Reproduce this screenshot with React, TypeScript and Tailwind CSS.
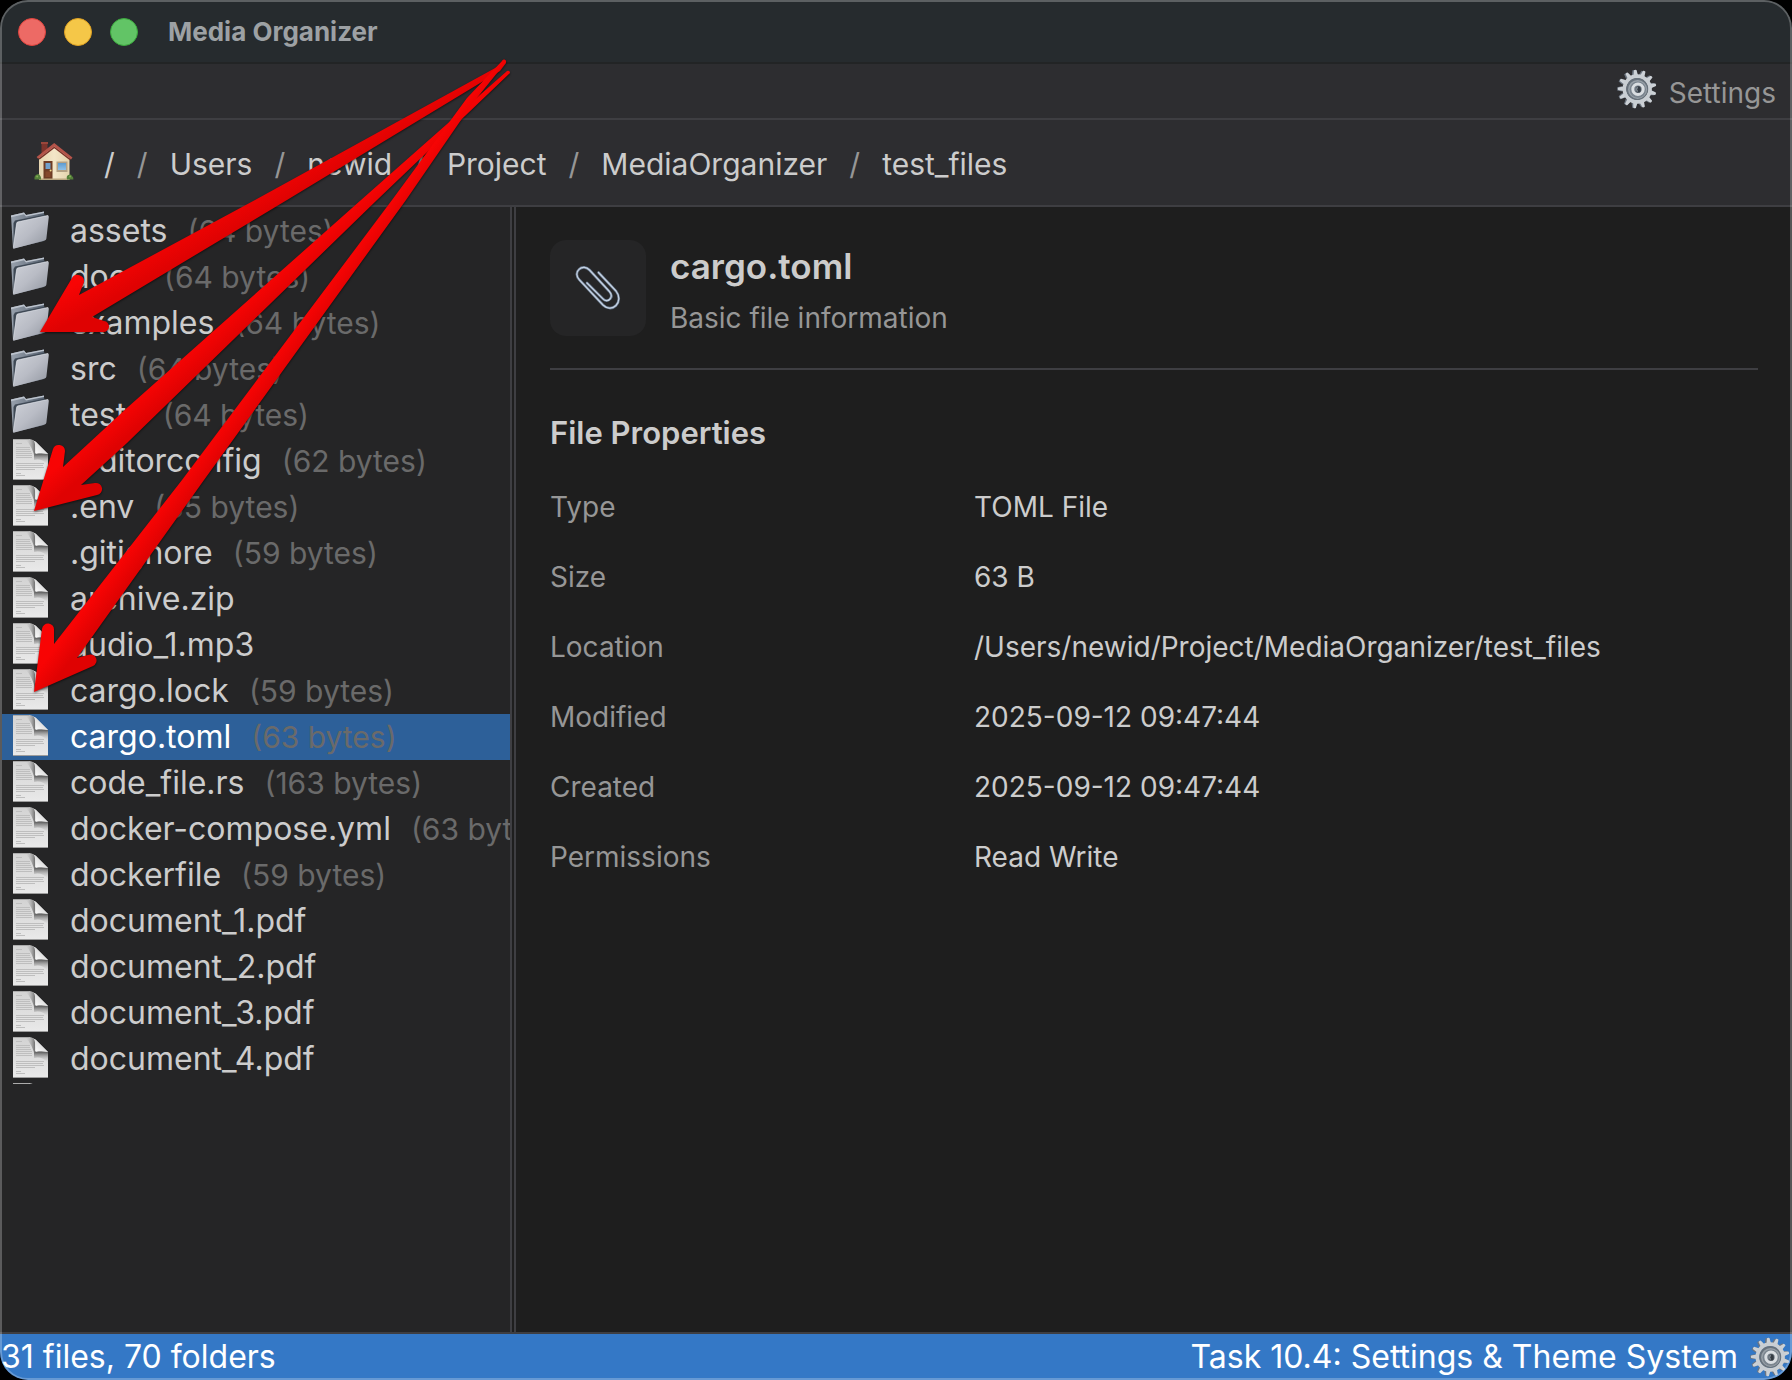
import React from "react";

const font = "font-['Inter','Liberation_Sans',sans-serif]";

type Entry = { name: string; size?: string; folder?: boolean; selected?: boolean };

const entries: Entry[] = [
  { name: "assets", size: "64 bytes", folder: true },
  { name: "docs", size: "64 bytes", folder: true },
  { name: "examples", size: "64 bytes", folder: true },
  { name: "src", size: "64 bytes", folder: true },
  { name: "tests", size: "64 bytes", folder: true },
  { name: ".editorconfig", size: "62 bytes" },
  { name: ".env", size: "65 bytes" },
  { name: ".gitignore", size: "59 bytes" },
  { name: "archive.zip" },
  { name: "audio_1.mp3" },
  { name: "cargo.lock", size: "59 bytes" },
  { name: "cargo.toml", size: "63 bytes", selected: true },
  { name: "code_file.rs", size: "163 bytes" },
  { name: "docker-compose.yml", size: "63 bytes" },
  { name: "dockerfile", size: "59 bytes" },
  { name: "document_1.pdf" },
  { name: "document_2.pdf" },
  { name: "document_3.pdf" },
  { name: "document_4.pdf" },
];

const properties = [
  ["Type", "TOML File"],
  ["Size", "63 B"],
  ["Location", "/Users/newid/Project/MediaOrganizer/test_files"],
  ["Modified", "2025-09-12 09:47:44"],
  ["Created", "2025-09-12 09:47:44"],
  ["Permissions", "Read Write"],
];

const crumbs = ["/", "Users", "newid", "Project", "MediaOrganizer", "test_files"];

function Gear() {
  const teeth = Array.from({ length: 13 }, (_, i) => (i * 360) / 13 - 6);
  return (
    <svg viewBox="0 0 40 40" className="size-10 shrink-0" aria-hidden="true">
      <g fill="#6c7580">
        {teeth.map((a) => (
          <path key={a} d="M16.4 6 L17.4 1 H20.6 L22 6 Z" transform={`rotate(${a} 19.2 20)`} />
        ))}
      </g>
      <g fill="#ccd1d6">
        {teeth.map((a) => (
          <path key={a} d="M18 6.5 L18.9 1 Q20.2 .2 21.5 1 L22.4 6.5 Z" transform={`rotate(${a} 20.2 20)`} />
        ))}
      </g>
      <circle cx="20.2" cy="20" r="12.7" fill="none" stroke="#c9ced3" strokeWidth="4" />
      <circle cx="20.2" cy="20" r="11" fill="#68727c" />
      <circle cx="20.6" cy="20.4" r="9.5" fill="#98a0a8" />
      <circle cx="20.8" cy="20.6" r="8.2" fill="#7a848e" />
      <circle cx="21" cy="20.2" r="5.2" fill="#6f7882" stroke="#d9dde1" strokeWidth="3" />
      <ellipse cx="21.4" cy="20.4" rx="2.4" ry="3.2" fill="#343b43" />
      <path d="M20.3 18.2 q-1.2 2.2 0 4.4" fill="none" stroke="#a9b1b9" strokeWidth="1" />
    </svg>
  );
}

function House() {
  return (
    <svg viewBox="0 0 40 40" className="size-10" aria-hidden="true">
      <defs>
        <linearGradient id="wall" x1="0" x2="1">
          <stop offset="0" stopColor="#e6d5b0" />
          <stop offset=".5" stopColor="#f3e6c8" />
          <stop offset="1" stopColor="#e4d3ad" />
        </linearGradient>
        <linearGradient id="pane" x1="0" x2="0" y1="0" y2="1">
          <stop offset="0" stopColor="#5d9bd0" />
          <stop offset="1" stopColor="#8fc1e8" />
        </linearGradient>
      </defs>
      <path d="M7.5 1.5 H13.500 V9 L7.5 14 Z" fill="#7d342c" />
      <path d="M7 1 H14 V3 H7 Z" fill="#9a463b" />
      <path d="M5 16 L20.5 4.5 L35.500 16 V38.500 H5 Z" fill="url(#wall)" />
      <path d="M20.2 2 L38.5 16.500 L37 18.600 L20.3 5.400 L4.200 17.800 L2.6 16 Z" fill="#b5544a" />
      <path d="M20.3 5.400 L37 18.600 L35.500 19 L20.3 7.200 L5.700 18.400 L4.200 17.800 Z" fill="#7b3028" />
      <path d="M9.500 20 H18.500 V38 H9.500 Z" fill="#6e3c25" />
      <path d="M11.500 22 H16.500 V28 H11.500 Z" fill="#6f9fcb" />
      <path d="M11.500 30.500 H16.500 V36 H11.500 Z" fill="#85482c" />
      <circle cx="16.600" cy="29.500" r="1" fill="#f0d88e" />
      <path d="M22.500 20.500 H33.500 V31 H22.500 Z" fill="#b3a184" />
      <path d="M24 22 H32 V29 H24 Z" fill="url(#pane)" />
      <path d="M5 37.500 H35.500 V39 H5 Z" fill="#b9a67f" />
      <path d="M.5 38.500 q-.5-4 2.300-5 q2-1.400 2.800.4 q2 1.800 1.400 4.600 Z" fill="#55803a" />
      <path d="M33 38.500 q-1-3 1.200-4.400 q2.600-1.600 3.600.6 q2 1.400 1.600 3.800 Z" fill="#55803a" />
      <circle cx="3.200" cy="35.400" r="1" fill="#83ad55" />
      <circle cx="36" cy="35.600" r="1" fill="#83ad55" />
    </svg>
  );
}

function Folder() {
  return (
    <svg viewBox="0 0 38 40" className="h-10 w-[38px]" aria-hidden="true">
      <defs>
        <linearGradient id="folderFront" x1="0" y1="0" x2="1" y2="1">
          <stop offset="0" stopColor="#cfd2d9" />
          <stop offset=".5" stopColor="#b9bcc5" />
          <stop offset="1" stopColor="#8f949e" />
        </linearGradient>
        <linearGradient id="folderBack" x1="0" y1="0" x2="1" y2="0">
          <stop offset="0" stopColor="#98a1ad" />
          <stop offset="1" stopColor="#56616f" />
        </linearGradient>
      </defs>
      <path d="M0 4.5 L13 1.5 L15 4 L33 .5 V30 L2 37.5 Z" fill="url(#folderBack)" />
      <path d="M0 4.5 L13 1.5 L15 4 L33 .5 V2 L15 5.6 L13 3.2 L0 6.2 Z" fill="#bcc3cd" />
      <path d="M2.500 12 L4 9.500 L34 3.600 V29 L2.5 37 Z" fill="#3f4955" />
      <path d="M5.4 12.500 Q5.6 11 7 10.700 L36 4.400 Q38 4 37.8 6 L35.4 27.6 Q35.2 29 33.8 29.4 L3.4 37.6 Q1.8 38 2.2 36 Z" fill="url(#folderFront)" />
      <path d="M2.4 36.500 L5.6 12.500 Q5.8 11.200 7 10.900 L37 4.500" fill="none" stroke="#dcdfe5" strokeWidth=".6" />
    </svg>
  );
}

function Page() {
  return (
    <svg viewBox="0 0 38 41" className="h-[41px] w-[38px]" aria-hidden="true">
      <defs>
        <linearGradient id="sheet" x1="0" y1="0" x2="0" y2="1">
          <stop offset="0" stopColor="#d2d2d2" />
          <stop offset="1" stopColor="#eaeaea" />
        </linearGradient>
        <linearGradient id="fold" x1="0" y1="0" x2="1" y2="0">
          <stop offset="0" stopColor="#d2d2d2" stopOpacity="0" />
          <stop offset="1" stopColor="#6f6f6f" />
        </linearGradient>
        <linearGradient id="curl" x1="0" y1="1" x2="1" y2="0">
          <stop offset="0" stopColor="#ffffff" />
          <stop offset="1" stopColor="#c4c4c4" />
        </linearGradient>
        <linearGradient id="curlShade" x1="0" y1="0" x2="0" y2="1">
          <stop offset="0" stopColor="#454545" />
          <stop offset="1" stopColor="#dcdcdc" stopOpacity="0" />
        </linearGradient>
      </defs>
      <path d="M2 0 H18 Q22 .5 25 3 L37 15 V41 H2 Z" fill="url(#sheet)" />
      <path d="M14 0 H18 Q22 .5 24 3 V20 Q22 8 14 0 Z" fill="url(#fold)" />
      <path d="M24 14 L37 15 V26 Q31 19 23 21 Z" fill="url(#curlShade)" />
      <path d="M23 2 Q25 6 24.500 15 Q31 13 37 15 L25 3 Q24 2.200 23 2 Z" fill="url(#curl)" />
      <g stroke="#bebebe" strokeWidth="1">
        <path d="M5 4.500 H11 M5 8.500 H19 M5 10.500 H19 M5 12.500 H20 M5 14.500 H21 M5 16.500 H21 M5 18.500 H21" />
        <path d="M5 24.500 H33 M5 26.500 H32 M5 28.500 H33 M5 30.500 H24 M5 34.500 H10 M5 36.500 H14" />
      </g>
      <path d="M2 .5 H18" stroke="#ababab" />
      <path d="M2 40.500 H37" stroke="#9c9c9c" />
    </svg>
  );
}

const clipPath =
  "M22.500 6.500 L40 25 C44 30 43.500 36 40 39.500 C36 43.500 30.500 42.500 27 39 L3.500 14 C0 10 0 6 3 3.400 C6 .4 10.500 .8 13.500 4 L33 25 C36 28.500 36 31 34 33 C32 35.400 29 35 27 32.800 L11 17";

function Paperclip() {
  return (
    <svg viewBox="0 0 44 44" className="size-11 overflow-visible" fill="none" strokeLinecap="round" aria-hidden="true">
      <path d={clipPath} stroke="#6d7d92" strokeWidth="2.6" />
      <path d={clipPath} stroke="#c6d3e3" strokeWidth="1.200" />
    </svg>
  );
}

function Arrows() {
  return (
    <svg
      viewBox="0 0 520 700"
      className="pointer-events-none absolute left-0 top-0 h-[700px] w-[520px] drop-shadow-[0_1px_1px_rgba(0,0,0,0.6)]"
      aria-hidden="true"
    >
      <defs>
        <linearGradient id="red1" gradientUnits="userSpaceOnUse" x1="256" y1="180" x2="272" y2="208">
          <stop offset="0" stopColor="#f80404" />
          <stop offset="1" stopColor="#df0202" />
        </linearGradient>
        <linearGradient id="red2" gradientUnits="userSpaceOnUse" x1="238" y1="306" x2="254" y2="324">
          <stop offset="0" stopColor="#f80404" />
          <stop offset="1" stopColor="#df0202" />
        </linearGradient>
        <linearGradient id="red3" gradientUnits="userSpaceOnUse" x1="282" y1="345" x2="298" y2="357">
          <stop offset="0" stopColor="#f80404" />
          <stop offset="1" stopColor="#df0202" />
        </linearGradient>
      </defs>
      <path
        fill="url(#red1)"
        d="M40 332 L72 278 A6.500 6.500 0 0 1 84 282 L79 295 L255 200 L497 67 L503 61 A2 2 0 0 1 506 63 L500 71 L287 200 L92 317 L104 321 A5.500 5.500 0 0 1 103 332 Z"
      />
      <path
        fill="url(#red2)"
        d="M34 511 L53 449 A6.200 6.200 0 0 1 65 451 L63 467 L128 407 L361 200 L507 71 A2 2 0 0 1 510 73 L377 200 L127 443 L81 485 L95 483 A6 6 0 0 1 97 495 Z"
      />
      <path
        fill="url(#red3)"
        d="M34 692 L42 629 A6 6 0 0 1 54 630 L54 644 L182 480 L392 200 L467 98 L502 61 A2 2 0 0 1 506 62 L472 104 L406 200 L204 480 L77 658 L88 655 A6 6 0 0 1 93 666 Z"
      />
    </svg>
  );
}

export default function App() {
  return (
    <div className="min-h-screen bg-black">
      <div className={`${font} relative flex min-h-screen flex-col overflow-hidden rounded-[28px] bg-[#1e1e1e] text-[#cccccc]`}>
        <header className="flex h-16 items-center border-b-2 border-[#222425] bg-[#262b2e] pl-[18px] pt-0.5">
          <div className="flex gap-[18px]">
            <button aria-label="Close" className="size-7 rounded-full border border-[#e0443e] bg-[#ed6a65]" />
            <button aria-label="Minimize" className="size-7 rounded-full border border-[#dea123] bg-[#f5c748]" />
            <button aria-label="Zoom" className="size-7 rounded-full border border-[#3ba83d] bg-[#62c466]" />
          </div>
          <h1 className="ml-[30px] text-[26px] font-bold leading-8 text-[#9da1a4]">Media Organizer</h1>
        </header>

        <div className="flex h-14 items-center justify-end border-b-2 border-[#3e3e42] bg-[#2d2d30] pr-4">
          <button className="flex items-start gap-3 text-[28px] leading-10 text-[#969696]">
            <Gear />
            <span className="pt-1">Settings</span>
          </button>
        </div>

        <nav aria-label="Breadcrumb" className="flex h-[87px] items-center border-b-2 border-[#3e3e42] bg-[#2d2d30] pl-[34px] text-[30px] leading-9">
          <a href="#home" aria-label="Home" className="pb-1">
            <House />
          </a>
          <ol className="ml-[30px] flex pt-0.5">
            {crumbs.map((crumb, i) => (
              <li key={crumb} className="flex">
                {i > 0 && <span className="mx-[22px] text-[#969696]">/</span>}
                <a href={`#${crumb}`}>{crumb}</a>
              </li>
            ))}
          </ol>
        </nav>

        <main className="flex flex-1">
          <aside className="mr-0.5 w-[512px] shrink-0 border-r-2 border-[#3e3e42] bg-[#252526] pl-0.5 pt-px">
            <ul>
              {entries.map((e) => (
                <li key={e.name}>
                  <button
                    className={`flex h-[46px] w-full items-baseline overflow-hidden whitespace-nowrap pl-[9px] text-left text-[32px] leading-[46px] ${
                      e.selected ? "bg-[#2d6099] text-white" : ""
                    }`}
                  >
                    <span className={`shrink-0 self-start ${e.folder ? "pt-[3px]" : "pt-px"}`}>
                      {e.folder ? <Folder /> : <Page />}
                    </span>
                    <span className="ml-[21px]">{e.name}</span>
                    {e.size && <span className="ml-5 text-[30px] text-[#6a6a6a]">({e.size})</span>}
                  </button>
                </li>
              ))}
            </ul>
            <div className="h-0.5 overflow-hidden pl-[9px] pt-px" aria-hidden="true">
              <Page />
            </div>
          </aside>

          <section className="min-w-0 flex-1 border-l-2 border-[#3e3e42] px-[34px] pt-[33px]">
            <div className="flex items-start gap-6 border-b-2 border-[#3e3e42] pb-6">
              <div className="flex size-24 items-center justify-center rounded-2xl bg-[#252526]">
                <Paperclip />
              </div>
              <div>
                <h2 className="text-[35px] font-semibold leading-[52px]">cargo.toml</h2>
                <p className="text-[28px] leading-[52px] text-[#969696]">Basic file information</p>
              </div>
            </div>
            <h3 className="mt-[43px] text-[31px] font-semibold leading-10">File Properties</h3>
            <dl className="mt-[19px] text-[28px] leading-9">
              {properties.map(([label, value]) => (
                <div key={label} className="flex h-[70px] items-center">
                  <dt className="w-[424px] shrink-0 text-[#969696]">{label}</dt>
                  <dd>{value}</dd>
                </div>
              ))}
            </dl>
          </section>
        </main>

        <footer className="flex h-12 items-center justify-between border-t-2 border-[#3e3e42] bg-[#3478c6] pl-px pr-0.5 text-[32px] leading-10 text-white">
          <span>31 files, 70 folders</span>
          <span className="flex items-center gap-3">
            Task 10.4: Settings &amp; Theme System
            <Gear />
          </span>
        </footer>

        <div className="pointer-events-none absolute inset-0 rounded-[28px] border-2 border-white/25" />
        <Arrows />
      </div>
    </div>
  );
}
